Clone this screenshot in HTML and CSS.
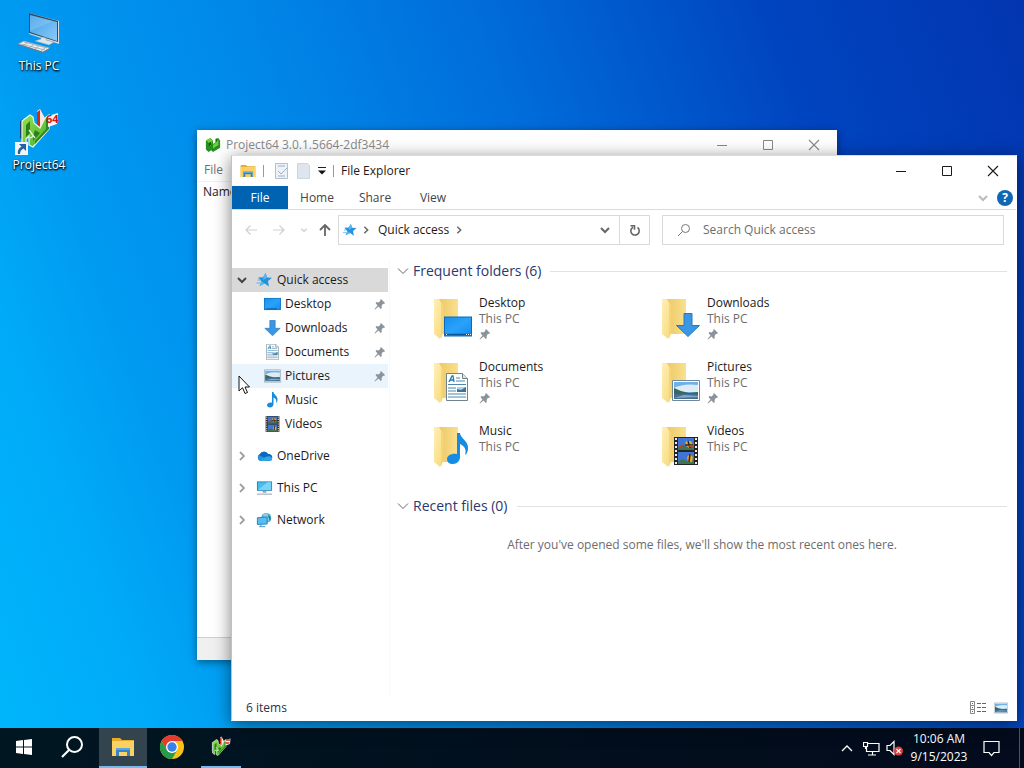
FILE: index.html
```html
<!DOCTYPE html>
<html lang="en">
<head>
  <meta charset="UTF-8" />
  <title>Desktop</title>
  <link rel="stylesheet" href="styles.css">
</head>
<body>

  <!-- icon library -->
  <svg class="sprite" aria-hidden="true">
    <defs>
      <linearGradient id="screen" x1="0" y1="0" x2="1" y2="1">
        <stop offset="0" stop-color="#3c9fe8" />
        <stop offset="1" stop-color="#8ccaf8" />
      </linearGradient>
      <linearGradient id="desk" x1="0" y1="0" x2="1" y2="1">
        <stop offset="0" stop-color="#1690f0" />
        <stop offset=".5" stop-color="#2aa2fa" />
        <stop offset="1" stop-color="#128cf0" />
      </linearGradient>
      <linearGradient id="fold" x1="0" y1="0" x2="1" y2="0">
        <stop offset="0" stop-color="#ecc766" />
        <stop offset="1" stop-color="#fae08e" />
      </linearGradient>
      <linearGradient id="flap" x1="0" y1="0" x2="1" y2="1">
        <stop offset="0" stop-color="#fff0b8" />
        <stop offset="1" stop-color="#f8d978" />
      </linearGradient>
      <linearGradient id="green" x1="0" y1="0" x2="1" y2="1">
        <stop offset="0" stop-color="#9be052" />
        <stop offset="1" stop-color="#3fb02c" />
      </linearGradient>
    </defs>

    <symbol id="i-computer" viewBox="0 0 44 44">
      <path d="M12 2L42 10V33L12 23Z" fill="#d7dde2" />
      <path d="M12 2L41 10V31L12 22Z" fill="#314b62" />
      <path d="M13 4L40 11V30L13 21Z" fill="url(#screen)" />
      <path d="M13 4L36 10L13 20Z" fill="#fff" opacity=".15" />
      <path d="M24 26l5 1v2l8 2-5 3-14-4 6-2z" fill="#dfe5e8" stroke="#91a4b0" stroke-width=".5" />
      <path d="M1 33l6-3 26 7-7 4z" fill="#edf0f2" stroke="#8397a5" stroke-width=".6" />
      <path d="M4 33l24 6M7 31l23 6M10 32l-4 3M16 34l-4 3M22 35l-4 3M28 37l-4 3" stroke="#8b9aa5" stroke-width=".7" />
      <path d="M1 33l25 8 7-4v1l-7 4-25-8z" fill="#65798a" />
    </symbol>

    <symbol id="i-p64" viewBox="0 0 44 44">
      <path d="M3 13l3-2v22l-3-3z" fill="#1b3f7d" />
      <path d="M20 3l3-2 7 13-4 8-6-4z" fill="#fbe7df" />
      <path d="M20 4l3-2v17l-3-2z" fill="#d62b1c" />
      <path d="M5 13l8-6 3 2 1 6 6 5 5-10 4-3v14L16 39l-4-2V28l-3 3v6l-4-3z" fill="url(#green)" stroke="#eef8e6" stroke-width="1.200" />
      <path d="M9 17l4-4v12l-4 4zM18 22l5 3-7 8v-5z" fill="#2c7f1b" />
      <path d="M29 12l3-2v11l-14 15v-3l11-12z" fill="#2b8a20" />
      <path d="M12 22l6 8M13 30l4-2" stroke="#e8f5df" stroke-width="1.300" />
      <path d="M31 8l10-3-1 11-9 3z" fill="#fff3ee" />
    </symbol>

    <symbol id="i-p64-small" viewBox="0 0 18 18">
      <path d="M1 4l5-3 3 3v4l3-2V2l3-1 2 3v8l-8 5-2-2-3 2-3-3z" fill="#219221" />
      <path d="M1 4l5-3 3 3-3 6-2 2V6zM9 9l4-3 2-4v7l-6 4z" fill="#71cf3a" />
      <path d="M4 7l3-2v3l-3 4zM12 6V2l2 1z" fill="#105711" />
    </symbol>

    <symbol id="i-explorer" viewBox="0 0 24 20">
      <path d="M1 1h8l2 2h12v16H1z" fill="#e8ab2c" />
      <path d="M1 4h22v15H1z" fill="#fcd163" />
      <path d="M5 11h14v8h-3v-4H8v4H5z" fill="#3585c6" />
      <path d="M5 11h14v2H5z" fill="#58a6de" />
    </symbol>

    <symbol id="i-star" viewBox="0 0 16 16">
      <path d="M9 1l1.500 4.500 5 .3-4 3.200.9 5.500-4.200-3L3 14l2-4.800L1.500 5.500l5-.3z" fill="#2493dd" />
      <path d="M9 1l1.500 4.500L7 8 6.500 5.200zM3 14l2-4.800L8.200 11.500z" fill="#55b8f3" />
      <path d="M1 8h4M0 11h4" stroke="#4aa8e7" stroke-width=".8" />
    </symbol>

    <symbol id="i-desktop" viewBox="0 0 28 20">
      <path d="M0 0h28v20H0z" fill="#0e6ab9" />
      <path d="M1 1h26v18H1z" fill="url(#desk)" />
      <path d="M1 18h26" stroke="#0a5798" stroke-width="1.500" />
      <path d="M2 18h1M22 18h1M24 18h1M26 18h1" stroke="#fff" stroke-width="1" />
    </symbol>

    <symbol id="i-down" viewBox="0 0 24 24">
      <path d="M8 .5h8v12h7.500L12 23.500.5 12.500H8z" fill="#3a97e4" stroke="#2878bd" />
    </symbol>

    <symbol id="i-doc" viewBox="0 0 22 28">
      <path d="M.5.5h16l5 5v22H.5z" fill="#fdfefe" stroke="#71828f" />
      <path d="M16.500.5v5h5" fill="#dce5ea" stroke="#71828f" />
      <path d="M3 9l3-6h1l1 6M4 7h4" fill="none" stroke="#217bb7" stroke-width="1.300" />
      <path d="M10 5h4M10 8h9M2 11.500h18M2 15h8M2 18h8M2 21h18M2 24h18" stroke="#4e86ad" />
      <path d="M11 14h9v5h-9z" fill="#3f719c" />
      <path d="M11 14h9l-5 3-4-1z" fill="#a9d6ed" />
    </symbol>

    <symbol id="i-pic" viewBox="0 0 28 21">
      <path d="M.5.5h27v20H.5z" fill="#fff" stroke="#70879b" />
      <path d="M2 2h24v17H2z" fill="#6cb2e9" />
      <path d="M2 8q9-5 24-3v7H2z" fill="#dcecf6" />
      <path d="M2 8l7 3 8 2 9-1v3H2z" fill="#3a665c" />
      <path d="M2 14h24v5H2z" fill="#446f91" />
      <path d="M2 18l10-3 14 1v1z" fill="#86abc3" />
    </symbol>

    <symbol id="i-music" viewBox="0 0 22 32">
      <path d="M10 0h3c0 5 9 8 8 16-.4 3-1 5-3 6 2-6-1-9-5-11v13c0 4-3 7-7 7s-6-2-6-5 4-6 10-5z" fill="#168ce0" />
    </symbol>

    <symbol id="i-video" viewBox="0 0 24 28">
      <path d="M0 0h24v28H0z" fill="#242424" />
      <path d="M2 1v27M22 1v27" stroke="#eee" stroke-width="2" stroke-dasharray="2 2" />
      <path d="M4 1h16v12H4zM4 15h16v12H4z" fill="#4175d3" />
      <path d="M4 10l5-2 4 2 3-3 4 3v3H4zM4 25l4-3 5 2 7-2v5H4z" fill="#407350" />
      <path d="M12 4h5l2 4-4 3-4-3zM13 20l3-3 3 3-1 5h-4z" fill="#e7a927" />
      <path d="M14 4l2 7M16 17l-1 8M11 8h8" stroke="#2b2726" stroke-width="1.500" />
      <path d="M5 10l4-2M15 9h4" stroke="#d83923" stroke-width="1.500" />
    </symbol>

    <symbol id="i-folder" viewBox="0 0 28 42">
      <path d="M5 1h20v35H5z" fill="url(#fold)" />
      <path d="M1 1h5l4 7v27l-3 6-6-5z" fill="url(#flap)" />
      <path d="M8 6l2 2v27l-2 6z" fill="#f6d674" />
    </symbol>

    <symbol id="i-cloud" viewBox="0 0 18 12">
      <path d="M4 11a4 4 0 0 1 0-7 5 5 0 0 1 9 0c3 0 5 2 4 5 0 1-1 2-3 2z" fill="#0869be" />
      <path d="M4 11a4 4 0 0 1-1-6l12 6z" fill="#2792df" />
      <path d="M4 11l6-4c4-2 8 0 7 3 0 1-1 1-3 1z" fill="#33a2e9" />
    </symbol>

    <symbol id="i-monitor" viewBox="0 0 18 16">
      <path d="M1 1h16v10H1z" fill="#2b84b9" />
      <path d="M2 2h14v8H2z" fill="#46bdf1" />
      <path d="M2 10l10-8h4v8z" fill="#78d3f8" />
      <path d="M7 11h4v2H7z" fill="#87a9bd" />
      <path d="M1 14.500h16" stroke="#8c9dae" />
    </symbol>

    <symbol id="i-network" viewBox="0 0 18 18">
      <circle cx="11" cy="6.500" r="5.500" fill="#4caed9" />
      <path d="M7 3l5-2 1 4 4 2-2 4-5-3z" fill="#8bd2e6" />
      <path d="M13 4q5 1 2 7z" fill="#24749e" />
      <path d="M1 6.500l11-1v8L1 14z" fill="#5abdf1" stroke="#207bb5" />
      <path d="M5 14v2M3 16.500h7" stroke="#3389bb" />
    </symbol>

    <symbol id="i-pin" viewBox="0 0 12 12">
      <path d="M7 1l4 4-1 1-1-.3L7.500 8l.3 2-1 1L4.500 8.500 1 11.500.5 11l3-3.500L1.500 5l1-1 2 .4L6.500 2.800 6.200 2z" fill="#8b939a" />
    </symbol>

    <symbol id="i-chev-d" viewBox="0 0 12 12">
      <path d="M2 4l4 4 4-4" fill="none" stroke="currentColor" stroke-width="2" />
    </symbol>
    <symbol id="i-chev-thin" viewBox="0 0 12 12">
      <path d="M1 3.500l5 5 5-5" fill="none" stroke="currentColor" stroke-width="1" />
    </symbol>
    <symbol id="i-chev-r" viewBox="0 0 12 12">
      <path d="M4 2l4 4-4 4" fill="none" stroke="currentColor" stroke-width="1.800" />
    </symbol>
    <symbol id="i-left" viewBox="0 0 14 14">
      <path d="M13 7H2M6.500 2.500L2 7l4.500 4.500" fill="none" stroke="currentColor" stroke-width="1.200" />
    </symbol>
    <symbol id="i-right" viewBox="0 0 14 14">
      <path d="M1 7h11M7.500 2.500L12 7l-4.500 4.500" fill="none" stroke="currentColor" stroke-width="1.200" />
    </symbol>
    <symbol id="i-up" viewBox="0 0 14 14">
      <path d="M7 13V2M2 7l5-5 5 5" fill="none" stroke="currentColor" stroke-width="1.800" />
    </symbol>

    <symbol id="i-min" viewBox="0 0 12 12">
      <path d="M1 6.500h10" stroke="currentColor" />
    </symbol>
    <symbol id="i-max" viewBox="0 0 12 12">
      <path d="M1.500 1.500h9v9h-9z" fill="none" stroke="currentColor" />
    </symbol>
    <symbol id="i-close" viewBox="0 0 12 12">
      <path d="M1 1l10 10M11 1L1 11" stroke="currentColor" stroke-width="1.100" />
    </symbol>
  </svg>

  <main class="desktop">
    <div class="shortcuts">
      <a class="shortcut" href="#this-pc">
        <svg class="pic"><use href="#i-computer" /></svg>
        <span>This PC</span>
      </a>
      <a class="shortcut" href="#project64">
        <svg class="pic tall"><use href="#i-p64" /></svg>
        <span class="badge64">64</span>
        <svg class="link-arrow" viewBox="0 0 13 13">
          <path d="M0 0h13v13H0z" fill="#f2f4f6" />
          <path d="M4 2h7v7L8.500 6.500Q5 8 5 12H3Q2 7 6.500 4.500z" fill="#2261a8" />
        </svg>
        <span>Project64</span>
      </a>
    </div>

    <!-- background window -->
    <section class="window project">
      <header class="titlebar">
        <svg class="app-icon"><use href="#i-p64-small" /></svg>
        <span class="title">Project64 3.0.1.5664-2df3434</span>
        <div class="controls">
          <button aria-label="Minimize"><svg class="s12"><use href="#i-min" /></svg></button>
          <button aria-label="Maximize"><svg class="s12"><use href="#i-max" /></svg></button>
          <button aria-label="Close"><svg class="s12"><use href="#i-close" /></svg></button>
        </div>
      </header>
      <nav class="project-menu"><button>File</button></nav>
      <div class="project-list">Name</div>
      <footer class="project-status"></footer>
    </section>

    <!-- file explorer -->
    <section class="window explorer">
      <header class="titlebar">
        <svg class="app-icon"><use href="#i-explorer" /></svg>
        <span class="sep"></span>
        <button class="quick" aria-label="Properties">
          <svg width="14" height="16" viewBox="0 0 14 16"><path d="M.5.5h12v15H.5z" fill="#edf2f8" stroke="#b4bfca" /><path d="M3 8l3 3 6-6M3 3h7M3 13h7" fill="none" stroke="#9fb2c6" /></svg>
        </button>
        <button class="quick" aria-label="New folder">
          <svg width="14" height="16" viewBox="0 0 14 16"><path d="M.5.5h10l2 2v13H.5z" fill="#dfe5ed" stroke="#cdd5df" /></svg>
        </button>
        <button class="customize" aria-label="Customize toolbar">
          <svg width="8" height="8" viewBox="0 0 8 8"><path d="M0 .5h8" stroke="#222" /><path d="M0 3.500h8l-4 4z" fill="#111" /></svg>
        </button>
        <span class="sep"></span>
        <span class="title">File Explorer</span>
        <div class="controls">
          <button aria-label="Minimize"><svg class="s12"><use href="#i-min" /></svg></button>
          <button aria-label="Maximize"><svg class="s12"><use href="#i-max" /></svg></button>
          <button aria-label="Close"><svg class="s12"><use href="#i-close" /></svg></button>
        </div>
      </header>

      <nav class="ribbon">
        <button class="file">File</button>
        <button>Home</button>
        <button>Share</button>
        <button>View</button>
        <div class="ribbon-end">
          <button class="expand" aria-label="Expand ribbon"><svg class="s12"><use href="#i-chev-d" /></svg></button>
          <button class="help" aria-label="Help">?</button>
        </div>
      </nav>

      <div class="toolbar">
        <div class="arrows">
          <button class="off" aria-label="Back"><svg class="s14"><use href="#i-left" /></svg></button>
          <button class="off" aria-label="Forward"><svg class="s14"><use href="#i-right" /></svg></button>
          <button class="off recent" aria-label="Recent locations"><svg class="s8"><use href="#i-chev-d" /></svg></button>
          <button class="up" aria-label="Up"><svg class="s14"><use href="#i-up" /></svg></button>
        </div>
        <div class="address">
          <svg class="s14"><use href="#i-star" /></svg>
          <svg class="s10"><use href="#i-chev-r" /></svg>
          <a href="#quick">Quick access</a>
          <svg class="s10"><use href="#i-chev-r" /></svg>
          <button class="drop" aria-label="Previous locations"><svg class="s12"><use href="#i-chev-d" /></svg></button>
          <button class="refresh" aria-label="Refresh">
            <svg width="12" height="14" viewBox="0 0 12 14"><path d="M8.500 4.500A4.200 4.200 0 1 1 4 4.200M1.500 2.800h4v4" fill="none" stroke="#666" stroke-width="1.600" /></svg>
          </button>
        </div>
        <label class="search">
          <svg width="14" height="14" viewBox="0 0 14 14"><circle cx="8.500" cy="5.500" r="4" fill="none" stroke="#777" /><path d="M5.500 8.500L1 13" stroke="#777" /></svg>
          <input type="text" placeholder="Search Quick access" aria-label="Search Quick access">
        </label>
      </div>

      <div class="panes">
        <nav class="tree">
          <a class="row root active" href="#quick"><svg class="s12 open"><use href="#i-chev-d" /></svg><svg class="icon"><use href="#i-star" /></svg>Quick access</a>
          <a class="row" href="#desktop"><svg class="icon"><use href="#i-desktop" /></svg>Desktop<svg class="pin"><use href="#i-pin" /></svg></a>
          <a class="row" href="#downloads"><svg class="icon"><use href="#i-down" /></svg>Downloads<svg class="pin"><use href="#i-pin" /></svg></a>
          <a class="row" href="#documents"><svg class="icon"><use href="#i-doc" /></svg>Documents<svg class="pin"><use href="#i-pin" /></svg></a>
          <a class="row hover" href="#pictures"><svg class="icon"><use href="#i-pic" /></svg>Pictures<svg class="pin"><use href="#i-pin" /></svg></a>
          <a class="row" href="#music"><svg class="icon"><use href="#i-music" /></svg>Music</a>
          <a class="row" href="#videos"><svg class="icon"><use href="#i-video" /></svg>Videos</a>
          <a class="row root apart" href="#onedrive"><svg class="s12"><use href="#i-chev-r" /></svg><svg class="icon"><use href="#i-cloud" /></svg>OneDrive</a>
          <a class="row root apart" href="#this-pc"><svg class="s12"><use href="#i-chev-r" /></svg><svg class="icon"><use href="#i-monitor" /></svg>This PC</a>
          <a class="row root apart" href="#network"><svg class="s12"><use href="#i-chev-r" /></svg><svg class="icon"><use href="#i-network" /></svg>Network</a>
        </nav>

        <div class="content">
          <h2><svg class="s12"><use href="#i-chev-thin" /></svg>Frequent folders (6)</h2>
          <div class="folders">
            <a class="folder" href="#desktop">
              <span class="thumb"><svg class="back"><use href="#i-folder" /></svg><svg class="over desktop-over"><use href="#i-desktop" /></svg></span>
              <span class="label">Desktop<small>This PC</small><svg class="pin"><use href="#i-pin" /></svg></span>
            </a>
            <a class="folder" href="#downloads">
              <span class="thumb"><svg class="back"><use href="#i-folder" /></svg><svg class="over down-over"><use href="#i-down" /></svg></span>
              <span class="label">Downloads<small>This PC</small><svg class="pin"><use href="#i-pin" /></svg></span>
            </a>
            <a class="folder" href="#documents">
              <span class="thumb"><svg class="back"><use href="#i-folder" /></svg><svg class="over doc-over"><use href="#i-doc" /></svg></span>
              <span class="label">Documents<small>This PC</small><svg class="pin"><use href="#i-pin" /></svg></span>
            </a>
            <a class="folder" href="#pictures">
              <span class="thumb"><svg class="back"><use href="#i-folder" /></svg><svg class="over pic-over"><use href="#i-pic" /></svg></span>
              <span class="label">Pictures<small>This PC</small><svg class="pin"><use href="#i-pin" /></svg></span>
            </a>
            <a class="folder" href="#music">
              <span class="thumb"><svg class="back"><use href="#i-folder" /></svg><svg class="over music-over"><use href="#i-music" /></svg></span>
              <span class="label">Music<small>This PC</small></span>
            </a>
            <a class="folder" href="#videos">
              <span class="thumb"><svg class="back"><use href="#i-folder" /></svg><svg class="over video-over"><use href="#i-video" /></svg></span>
              <span class="label">Videos<small>This PC</small></span>
            </a>
          </div>
          <h2><svg class="s12"><use href="#i-chev-thin" /></svg>Recent files (0)</h2>
          <p class="empty">After you've opened some files, we'll show the most recent ones here.</p>
        </div>
      </div>

      <footer class="status">
        <span>6 items</span>
        <div class="views">
          <button aria-label="Details view">
            <svg width="17" height="14" viewBox="0 0 17 14"><path d="M.5.5h4v4h-4zM.5 4.500h4v4h-4zM.5 8.500h4v4h-4z" fill="none" stroke="#888" /><path d="M2 2.500h1M2 6.500h1M2 10.500h1M7 2.500h4M12 2.500h4M7 6.500h4M12 6.500h4M7 10.500h4M12 10.500h4" stroke="#666" /></svg>
          </button>
          <button aria-label="Large icons view"><svg width="14" height="12"><use href="#i-pic" /></svg></button>
        </div>
      </footer>
    </section>

    <svg class="cursor" viewBox="0 0 12 20">
      <path d="M1 1v15l3.500-3.300L7 18.500l2.500-1L7 12h4.500z" fill="#fff" stroke="#111" />
    </svg>
  </main>

  <footer class="taskbar">
    <button aria-label="Start">
      <svg width="16" height="16" viewBox="0 0 16 16"><path d="M0 2l7-1v6.500H0zM8 1l8-1v7.500H8zM0 8.500h7V15l-7-1zM8 8.500h8V16l-8-1z" fill="#fff" /></svg>
    </button>
    <button aria-label="Search">
      <svg width="24" height="24" viewBox="0 0 24 24"><circle cx="14.500" cy="9.500" r="7.500" fill="none" stroke="#fff" stroke-width="2" /><path d="M9 15l-7 7" stroke="#fff" stroke-width="2.200" /></svg>
    </button>
    <button class="current" aria-label="File Explorer"><svg width="24" height="20"><use href="#i-explorer" /></svg></button>
    <button class="chrome" aria-label="Chrome">
      <svg width="24" height="24" viewBox="0 0 24 24">
        <circle cx="12" cy="12" r="12" fill="#fbc116" />
        <path d="M1.600 6a12 12 0 0 1 20.800 0H12L6.800 15z" fill="#e33b2e" />
        <path d="M1.600 6a12 12 0 0 0 10.400 18l5.200-9-5.200 3-5.200-3z" fill="#269b4b" />
        <circle cx="12" cy="12" r="6" fill="#fff" />
        <circle cx="12" cy="12" r="4.700" fill="#3b80e8" />
      </svg>
    </button>
    <button class="running" aria-label="Project64">
      <svg width="22" height="22" viewBox="0 0 44 44"><use href="#i-p64" width="44" height="44" /><path d="M32 8h8M31 14h8" stroke="#c9302a" stroke-width="3" /></svg>
    </button>

    <div class="tray">
      <button aria-label="Hidden icons"><svg width="12" height="8" viewBox="0 0 12 8"><path d="M1 7l5-5 5 5" fill="none" stroke="#fff" stroke-width="1.300" /></svg></button>
      <button aria-label="Network">
        <svg width="17" height="15" viewBox="0 0 17 15"><path d="M5 2.500h11v8H3.500V6M9.500 11v3M5 14h8M.5 1.500h4v4h-4zM2.500 5.500V8" fill="none" stroke="#fff" stroke-width="1.200" /></svg>
      </button>
      <button aria-label="Sound muted">
        <svg width="18" height="16" viewBox="0 0 18 16"><path d="M1 5.500h3l4-4v13l-4-4H1z" fill="none" stroke="#fff" stroke-width="1.200" /><circle cx="12.500" cy="11" r="4.500" fill="#dc3d3d" /><path d="M10.500 9l4 4M14.500 9l-4 4" stroke="#fff" stroke-width="1.200" /></svg>
      </button>
      <button class="clock"><span>10:06 AM</span><span>9/15/2023</span></button>
      <button class="notes" aria-label="Notifications">
        <svg width="17" height="17" viewBox="0 0 17 17"><path d="M1 1.500h15v11h-5L8.500 15.500 6 12.500H1z" fill="none" stroke="#fff" stroke-width="1.200" /></svg>
      </button>
      <span class="peek"></span>
    </div>
  </footer>

</body>
</html>
```
FILE: styles.css
```css
* {
  box-sizing: border-box;
}
body {
  margin: 0;
  height: 100vh;
  display: flex;
  flex-direction: column;
  overflow: hidden;
  font-family: "Open Sans", "Noto Sans", sans-serif;
  font-size: 12px;
  line-height: 16px;
  color: #1a1a1a;
}
button {
  display: flex;
  align-items: center;
  justify-content: center;
  padding: 0;
  border: none;
  background: none;
  color: inherit;
  font: inherit;
}
a {
  color: inherit;
  text-decoration: none;
}
svg {
  flex: none;
}
.sprite {
  position: absolute;
  width: 0;
  height: 0;
}
.s8 { width: 8px; height: 8px; }
.s10 { width: 10px; height: 10px; }
.s12 { width: 12px; height: 12px; }
.s14 { width: 14px; height: 14px; }

/* desktop */
.desktop {
  position: relative;
  flex: 1;
  background: linear-gradient(70deg, #00b6fb 0%, #00aaf8 12%, #009af1 21%, #0087e8 39%, #006cda 58%, #0044bf 80%, #0335b0 100%);
}
.shortcuts {
  display: flex;
  flex-direction: column;
  gap: 32px;
  width: 78px;
  padding-top: 11px;
}
.shortcut {
  position: relative;
  display: flex;
  flex-direction: column;
  align-items: center;
  gap: 3px;
  color: #fff;
  text-shadow: 1px 1px 2px #000, 0 1px 2px #000;
}
.pic {
  width: 44px;
  height: 44px;
}
.pic.tall {
  height: 48px;
}
.badge64 {
  position: absolute;
  left: 46px;
  top: 5px;
  color: #d01515;
  font-size: 11px;
  font-weight: bold;
  text-shadow: none;
}
.link-arrow {
  position: absolute;
  left: 15px;
  bottom: 18px;
  width: 13px;
  height: 13px;
}
.cursor {
  position: absolute;
  left: 238px;
  top: 375px;
  width: 12px;
  height: 20px;
}

/* windows */
.window {
  position: absolute;
  display: flex;
  flex-direction: column;
  background: #fff;
}
.project {
  left: 197px;
  right: 187px;
  top: 130px;
  bottom: 68px;
  box-shadow: 0 2px 8px rgba(0, 0, 0, .45);
}
.explorer {
  left: 231px;
  right: 7px;
  top: 155px;
  bottom: 7px;
  border: 1px solid #bbc3ca;
  border-top-color: #ddd;
  border-right-color: #fff;
  border-bottom-color: #fff;
  box-shadow: 0 3px 16px rgba(0, 0, 0, .5);
}
.titlebar {
  display: flex;
  align-items: center;
  height: 30px;
  padding-left: 8px;
}
.app-icon {
  width: 16px;
  height: 16px;
}
.controls {
  display: flex;
  margin-left: auto;
}
.controls button {
  width: 46px;
  height: 30px;
}
.project .titlebar {
  gap: 5px;
  color: #898989;
}
.project-menu {
  height: 22px;
  padding: 2px 0 0 7px;
  color: #707070;
  border-bottom: 1px solid #f0f0f0;
}
.project-list {
  flex: 1;
  padding: 2px 6px;
}
.project-status {
  height: 23px;
  background: #f0f0f0;
  border-top: 1px solid #d0d0d0;
}
.sep {
  width: 1px;
  height: 12px;
  margin: 0 7px;
  background: #999;
}
.quick {
  width: 22px;
}
.customize {
  width: 14px;
}
.customize + .sep {
  margin-left: 4px;
}

/* ribbon and address bar */
.ribbon {
  display: flex;
  height: 24px;
  color: #444;
  border-bottom: 1px solid #dadbdc;
}
.ribbon button {
  width: 58px;
}
.ribbon .file {
  width: 56px;
  background: #0063b1;
  color: #fff;
}
.ribbon-end {
  display: flex;
  align-items: center;
  gap: 8px;
  margin-left: auto;
  padding-right: 3px;
}
.ribbon-end .expand {
  width: 12px;
  color: #bbb;
}
.ribbon-end .help {
  width: 16px;
  height: 16px;
  border-radius: 50%;
  background: #1068b5;
  color: #fff;
  font-weight: bold;
}
.toolbar {
  display: flex;
  height: 40px;
  padding: 5px 12px 5px 8px;
}
.arrows {
  display: flex;
  align-items: center;
  width: 98px;
}
.arrows button {
  width: 28px;
  height: 30px;
}
.arrows .off {
  justify-content: flex-start;
  padding-left: 4px;
  color: #d0d0d0;
}
.arrows .recent {
  width: 18px;
}
.arrows .up {
  width: 22px;
  color: #666;
}
.address {
  display: flex;
  align-items: center;
  flex: 306;
  border: 1px solid #d9d9d9;
  padding-left: 4px;
  gap: 4px;
  color: #666;
}
.address a {
  margin: 0 1px 0 3px;
  color: #1a1a1a;
}
.drop {
  width: 28px;
  margin-left: auto;
}
.refresh {
  align-self: stretch;
  width: 30px;
  margin-left: -4px;
  border-left: 1px solid #d9d9d9;
}
.search {
  display: flex;
  align-items: center;
  gap: 12px;
  flex: 326;
  margin-left: 12px;
  padding-left: 14px;
  border: 1px solid #d9d9d9;
}
.search input {
  flex: 1;
  min-width: 0;
  padding: 0;
  border: none;
  outline: none;
  font: inherit;
}
.search input::placeholder {
  color: #6d6d6d;
}

/* folder tree */
.panes {
  display: flex;
  flex: 1;
  min-height: 0;
  padding-top: 10px;
}
.tree {
  width: 158px;
  padding: 8px 1px 0 0;
  border-right: 1px solid #f9f9f9;
}
.row {
  display: flex;
  align-items: center;
  gap: 4px;
  height: 24px;
  padding-left: 32px;
}
.row.root {
  padding-left: 4px;
}
.root .s12 {
  margin-right: 4px;
  color: #a0a0a0;
}
.root .open {
  color: #444;
}
.root.apart {
  margin-top: 8px;
}
.row.active {
  background: #d9d9d9;
}
.row.hover {
  background: #e9f4fd;
}
.icon {
  width: 17px;
  height: 16px;
}
.pin {
  width: 12px;
  height: 12px;
}
.row .pin {
  margin-left: auto;
  margin-right: 2px;
}

/* content */
.content {
  flex: 1;
  padding: 0 9px 0 7px;
}
.content h2 {
  display: flex;
  align-items: center;
  gap: 4px;
  height: 22px;
  margin: 0;
  color: #2b376f;
  font-size: 14px;
  font-weight: normal;
}
.content h2 svg {
  color: #666;
}
.content h2::after {
  content: "";
  flex: 1;
  height: 1px;
  margin-left: 5px;
  background: #e2e2e2;
}
.folders {
  display: grid;
  grid-template-columns: 228px 228px;
  grid-auto-rows: 64px;
  padding: 13px 0 8px 36px;
}
.folder {
  display: flex;
  gap: 6px;
}
.thumb {
  position: relative;
  width: 40px;
  height: 44px;
  padding-top: 3px;
}
.back {
  width: 28px;
  height: 42px;
}
.over {
  position: absolute;
  right: 1px;
  bottom: 2px;
}
.desktop-over { width: 28px; height: 21px; }
.down-over { width: 24px; height: 24px; }
.doc-over { width: 22px; height: 28px; right: 5px; }
.pic-over { width: 28px; height: 21px; }
.music-over { width: 22px; height: 32px; right: 4px; }
.video-over { width: 24px; height: 28px; right: 3px; }
.label {
  display: flex;
  flex-direction: column;
}
.label small {
  color: #6d6d6d;
  font-size: 12px;
}
.label .pin {
  margin-top: 1px;
}
.empty {
  margin: 20px 0;
  text-align: center;
  color: #6d6d6d;
}
.status {
  display: flex;
  align-items: center;
  justify-content: space-between;
  height: 24px;
  padding: 0 8px 0 14px;
  color: #28344b;
}
.views {
  display: flex;
  gap: 7px;
}

/* taskbar */
.taskbar {
  display: flex;
  height: 40px;
  background: linear-gradient(90deg, #001722, #020e1d 60%, #030b1c);
  color: #fff;
}
.taskbar > button {
  width: 48px;
  border-bottom: 2px solid transparent;
}
.taskbar > .current {
  margin-left: 3px;
  background: #33444e;
  border-bottom-color: #76b9ed;
}
.taskbar > .chrome {
  width: 50px;
}
.taskbar > .running {
  width: 40px;
  margin-left: 4px;
  border-bottom-color: #76b9ed;
}
.tray {
  display: flex;
  align-items: center;
  margin-left: auto;
}
.tray button {
  width: 24px;
  height: 40px;
}
.tray .clock {
  flex-direction: column;
  width: 64px;
  line-height: 18px;
}
.tray .notes {
  width: 40px;
}
.peek {
  width: 1px;
  height: 40px;
  margin: 0 4px 0 8px;
  background: #4b5562;
}
```
